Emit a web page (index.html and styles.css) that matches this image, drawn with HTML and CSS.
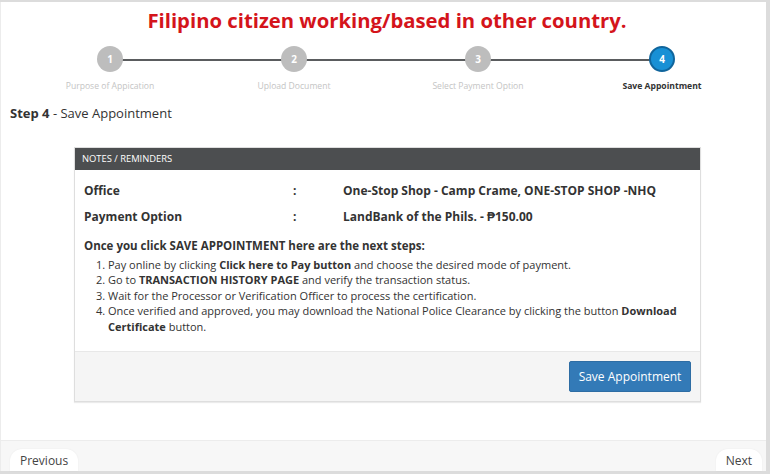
FILE: index.html
```html
<!DOCTYPE html>
<html>
<head>
<meta charset="utf-8">
<link rel="stylesheet" href="styles.css">
</head>
<body>
<div class="frame">
  <div class="content">
    <h1 class="title">Filipino citizen working/based in other country.</h1>
    <div class="stepper">
      <div class="track"></div>
      <div class="step"><span class="dot">1</span><span class="label">Purpose of Appication</span></div>
      <div class="step"><span class="dot">2</span><span class="label">Upload Document</span></div>
      <div class="step"><span class="dot">3</span><span class="label">Select Payment Option</span></div>
      <div class="step active"><span class="dot">4</span><span class="label">Save Appointment</span></div>
    </div>
    <div class="step-title"><b>Step 4</b> - Save Appointment</div>
    <div class="card">
      <div class="card-head">NOTES / REMINDERS</div>
      <div class="card-body">
        <div class="row"><span class="k">Office</span><span class="c">:</span><span class="v">One-Stop Shop - Camp Crame, ONE-STOP SHOP -NHQ</span></div>
        <div class="row"><span class="k">Payment Option</span><span class="c">:</span><span class="v">LandBank of the Phils. - ₱150.00</span></div>
        <div class="lead">Once you click SAVE APPOINTMENT here are the next steps:</div>
        <ol class="steps">
          <li>Pay online by clicking <b>Click here to Pay button</b> and choose the desired mode of payment.</li>
          <li>Go to <b>TRANSACTION HISTORY PAGE</b> and verify the transaction status.</li>
          <li>Wait for the Processor or Verification Officer to process the certification.</li>
          <li>Once verified and approved, you may download the National Police Clearance by clicking the button <b>Download</b> <b>Certificate</b> button.</li>
        </ol>
      </div>
      <div class="card-foot"><button class="btn-primary">Save Appointment</button></div>
    </div>
  </div>
  <div class="nav">
    <button class="btn-nav">Previous</button>
    <button class="btn-nav">Next</button>
  </div>
</div>
</body>
</html>
```

FILE: styles.css
```css
html, body { margin: 0; padding: 0; }
body {
  background: #dcdcdc;
  font-family: "Open Sans", "Liberation Sans", sans-serif;
  color: #333;
  width: 770px;
  height: 474px;
  overflow: hidden;
}
.frame {
  margin: 2px 4px 0 0;
  height: 469px;
  background: #fff;
  border-left: 1px solid #ececec;
  display: flex;
  flex-direction: column;
}
.content { flex: 1; }
.title {
  margin: 0;
  padding: 4px 0 0 7px;
  text-align: center;
  color: #d4141b;
  font-size: 20.3px;
  font-weight: 700;
  line-height: 28px;
}
.stepper {
  position: relative;
  display: grid;
  grid-template-columns: repeat(4, 1fr);
  margin: 12px 12px 0 17px;
}
.track {
  position: absolute;
  left: 12.5%;
  right: 12.5%;
  top: 13px;
  height: 2px;
  background: #5a5c5e;
}
.step {
  display: flex;
  flex-direction: column;
  align-items: center;
  position: relative;
}
.dot {
  width: 26px;
  height: 26px;
  border-radius: 50%;
  background: #bdbdbd;
  color: #fff;
  font-size: 10px;
  font-weight: 700;
  display: flex;
  align-items: center;
  justify-content: center;
  box-sizing: border-box;
}
.active .dot {
  background: #1890d5;
  border: 2px solid #10659c;
}
.label {
  margin-top: 8px;
  font-size: 8.6px;
  color: #c4c4c4;
  line-height: 12px;
}
.active .label { color: #333; font-weight: 700; }
.step-title {
  margin: 12px 0 0 9px;
  font-size: 13px;
  line-height: 18px;
  color: #333;
}
.card {
  margin: 25px 0 0 73px;
  width: 625px;
  border: 1px solid #dedede;
  box-shadow: 0 1px 1px rgba(0,0,0,0.08);
}
.card-head {
  background: #4c4e50;
  color: #fff;
  font-size: 9.4px;
  line-height: 22px;
  padding-left: 7px;
}
.card-body {
  padding: 13px 10px 17px 9px;
}
.row {
  display: grid;
  grid-template-columns: 209px 50px 1fr;
  font-size: 12px;
  font-weight: 700;
  line-height: 16px;
  margin-bottom: 10px;
}
.lead {
  font-size: 11.5px;
  font-weight: 700;
  line-height: 16px;
  padding-top: 3px;
}
.steps {
  margin: 3px 0 0 0;
  padding-left: 24px;
  font-size: 11px;
  line-height: 15.4px;
  color: #333;
}
.card-foot {
  background: #f5f5f5;
  border-top: 1px solid #e8e8e8;
  display: flex;
  justify-content: flex-end;
  padding: 9px 9px 9px 0;
}
.btn-primary {
  background: #337ab7;
  color: #fff;
  border: 1px solid #2e6da4;
  font-family: "Open Sans", "Liberation Sans", sans-serif;
  font-size: 12px;
  width: 122px;
  height: 31px;
  border-radius: 2px;
  padding: 0;
}
.nav {
  background: #f7f7f7;
  border-top: 1px solid #ececec;
  height: 30px;
  display: flex;
  justify-content: space-between;
  align-items: flex-end;
  padding: 0 4px 0 9px;
}
.btn-nav {
  background: #fff;
  border: none;
  border-radius: 12px 12px 0 0;
  font-family: "Open Sans", "Liberation Sans", sans-serif;
  font-size: 12px;
  color: #444;
  height: 22px;
  padding: 0 10px;
  box-shadow: 0 0 2px rgba(0,0,0,0.06);
}
```
